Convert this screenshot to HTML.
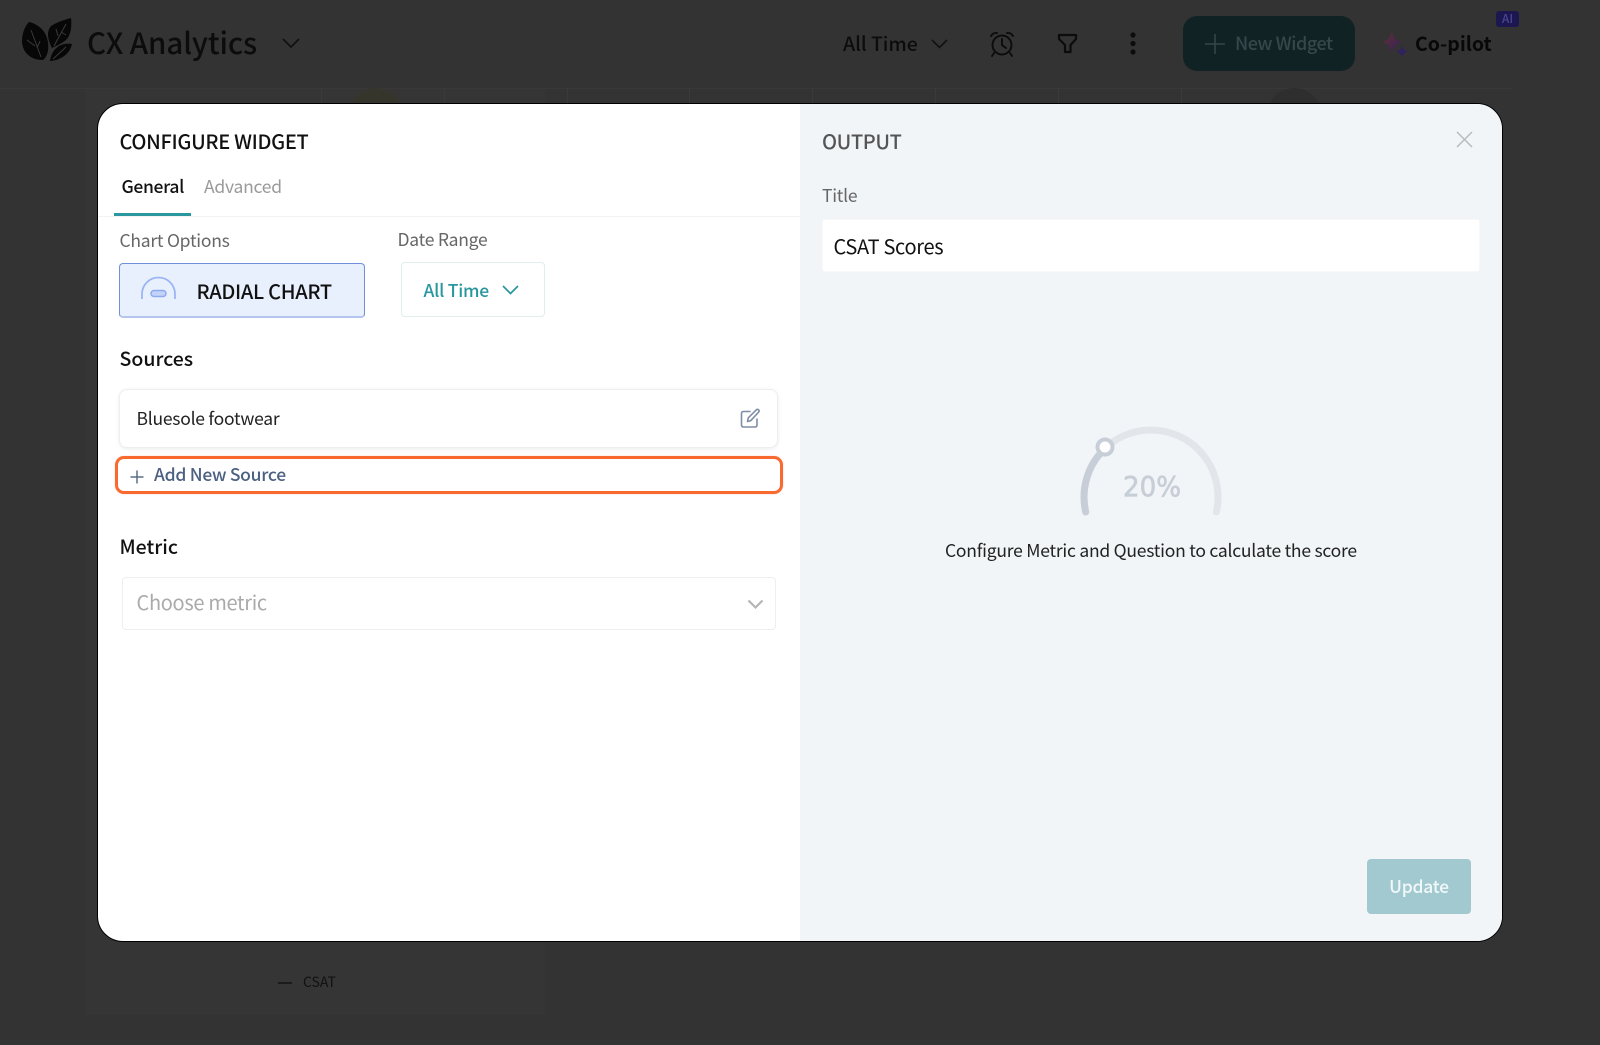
<!DOCTYPE html>
<html><head><meta charset="utf-8"><title>Configure Widget</title>
<style>
html,body{margin:0;padding:0;width:1600px;height:1045px;overflow:hidden;background:#333;font-family:"Noto Sans CJK SC","Liberation Sans",sans-serif}
#r{position:relative;width:1600px;height:1045px;overflow:hidden}
.a{position:absolute;box-sizing:border-box}
.t{position:absolute;white-space:nowrap;line-height:30px;height:30px}
.s{font-size:17.5px;letter-spacing:-.25px}
.l{font-size:20px;letter-spacing:-.32px}
svg{position:absolute;overflow:visible}
</style></head><body><div id="r">
<!-- dim background -->
<div class="a" style="left:86px;top:88px;width:459px;height:927px;background:#353535"></div>
<div class="a" style="left:0;top:88px;width:1513px;height:1px;background:#383838"></div>
<div class="a" style="left:321px;top:88px;width:1px;height:16px;background:#3a3a3a"></div>
<div class="a" style="left:444px;top:88px;width:1px;height:16px;background:#3a3a3a"></div>
<div class="a" style="left:567px;top:88px;width:1px;height:16px;background:#3a3a3a"></div>
<div class="a" style="left:689px;top:88px;width:1px;height:16px;background:#3a3a3a"></div>
<div class="a" style="left:812px;top:88px;width:1px;height:16px;background:#3a3a3a"></div>
<div class="a" style="left:935px;top:88px;width:1px;height:16px;background:#3a3a3a"></div>
<div class="a" style="left:1058px;top:88px;width:1px;height:16px;background:#3a3a3a"></div>
<div class="a" style="left:1181px;top:88px;width:1px;height:16px;background:#3a3a3a"></div>
<div class="a" style="left:350px;top:88px;width:52px;height:52px;border-radius:50%;background:#36352c"></div>
<div class="a" style="left:1267px;top:88px;width:54px;height:54px;border-radius:50%;background:#2e2e2e"></div>

<!-- logo -->
<svg style="left:20px;top:16px" width="54" height="46" viewBox="0 0 54 46">
<path d="M9 6 C18 8 27 15 28 27 C29 35 27 41 23 44 C12 44 3 38 2 26 C2 17 5 10 9 6Z" fill="#070707"/>
<path d="M31 10 C37 6 44 4 51 2 C52 10 51 19 46 24 C41 28 36 30 32 32 C28 24 26 16 31 10Z" fill="#070707"/>
<path d="M52 28 C50 37 42 44 30 45 C31 38 34 33 39 30 C43 28 48 27 52 28Z" fill="#070707"/>
<path d="M11 14 L21 41 M7 24 L15 30 M20 25 L17 32 M34 30 L46 8 M38 20 L36 13 M41 16 L46 19 M33 43 L46 31" stroke="#3a3a3a" stroke-width="1" fill="none"/>
</svg>
<div class="t" style="left:87px;top:27px;font-size:29.500px;font-weight:500;letter-spacing:-.1px;color:#0c0c0c">CX Analytics</div>
<svg style="left:282px;top:38px" width="18" height="11"><path d="M1 1 L9 9 L17 1" fill="none" stroke="#111" stroke-width="1.800"/></svg>

<div class="t" style="left:843px;top:28px;font-size:19.500px;font-weight:500;letter-spacing:-.05px;color:#0c0c0c">All Time</div>
<svg style="left:931px;top:39px" width="17" height="10"><path d="M1 1 L8.500 8.500 L16 1" fill="none" stroke="#111" stroke-width="1.600"/></svg>
<!-- alarm -->
<svg style="left:989px;top:31px" width="26" height="26" viewBox="0 0 26 26" fill="none" stroke="#0c0c0c" stroke-width="1.900" stroke-linecap="round">
<circle cx="13" cy="14" r="9.500"/><path d="M13 8 V14 L17 17"/><path d="M2 5 Q4 1.500 8 2 M24 5 Q22 1.500 18 2 M5 22 L3 25 M21 22 L23 25"/></svg>
<!-- filter -->
<svg style="left:1058px;top:34px" width="19" height="19" viewBox="0 0 19 19" fill="none" stroke="#0c0c0c" stroke-width="2.200" stroke-linejoin="round">
<path d="M1 1 H18 V5 L12.500 11 V18 H7 V11 L1 5Z"/></svg>
<svg style="left:1129px;top:31px" width="8" height="24"><circle cx="4" cy="4" r="2.600" fill="#0c0c0c"/><circle cx="4" cy="12.500" r="2.600" fill="#0c0c0c"/><circle cx="4" cy="21" r="2.600" fill="#0c0c0c"/></svg>
<!-- new widget -->
<div class="a" style="left:1183px;top:16px;width:172px;height:55px;border-radius:14px;background:#112225"></div>
<svg style="left:1205px;top:34px" width="20" height="20"><path d="M10 0 V20 M0 10 H20" stroke="#33464a" stroke-width="1.600"/></svg>
<div class="t" style="left:1235px;top:28px;font-size:18px;font-weight:500;letter-spacing:-.45px;color:#34484b">New Widget</div>
<!-- copilot -->
<svg style="left:1382px;top:31px" width="27" height="27" viewBox="0 0 27 27">
<defs><linearGradient id="g" x1="0" y1="0" x2="1" y2="1"><stop offset="0" stop-color="#61302f"/><stop offset="1" stop-color="#33205e"/></linearGradient></defs>
<path d="M10 0 C11.500 6 13.500 9 20 11 C13.500 13 11.500 16 10 22 C8.500 16 6.500 13 0 11 C6.500 9 8.500 6 10 0Z" fill="url(#g)"/>
<path d="M20 14 C20.800 18 22 19.500 26 20.500 C22 21.500 20.800 23 20 27 C19.200 23 18 21.500 14 20.500 C18 19.500 19.200 18 20 14Z" fill="#30215f"/></svg>
<div class="t" style="left:1415px;top:28px;font-size:19.500px;font-weight:700;color:#080808">Co-pilot</div>
<div class="a" style="left:1496px;top:11px;width:23px;height:16px;border-radius:3px;background:#1c1750;color:#4a4690;font-size:12px;font-weight:500;text-align:center;line-height:16px">AI</div>

<!-- footer legend -->
<div class="a" style="left:278px;top:982px;width:14px;height:2px;background:#1b1b1b"></div>
<div class="t" style="left:303px;top:967px;font-size:14px;color:#111">CSAT</div>

<!-- modal -->
<div class="a" style="left:97px;top:103px;width:1406px;height:839px;border:1px solid #000;border-radius:26px;overflow:hidden;background:#fff">
  <div class="a" style="left:702px;top:0;width:702px;height:837px;background:#f1f5f8"></div>
</div>

<!-- left panel -->
<div class="t l" style="left:119.500px;top:126px;font-weight:500;color:#111">CONFIGURE WIDGET</div>
<div class="t s" style="left:121.500px;top:171.500px;font-weight:500;letter-spacing:-.35px;color:#111">General</div>
<div class="t s" style="left:204px;top:171.500px;color:#9a9a9a">Advanced</div>
<div class="a" style="left:98px;top:216px;width:702px;height:1px;background:#f2f2f2"></div>
<div class="a" style="left:114px;top:213px;width:77px;height:3px;background:#2a969e"></div>
<div class="t s" style="left:119.500px;top:225.500px;color:#666">Chart Options</div>
<div class="t s" style="left:397.500px;top:224.500px;color:#666">Date Range</div>

<div class="a" style="left:119px;top:263px;width:246px;height:55px;background:#e9f0fd;border:1px solid #6f8fdd;border-bottom:2px solid #b4c5ee;border-radius:4px"></div>
<svg style="left:140px;top:276px" width="37" height="24" viewBox="0 0 37 24">
<path d="M2 23 V18 A16.500 16.500 0 0 1 35 18 V23" fill="none" stroke="#9ab5f5" stroke-width="1.800"/>
<rect x="11" y="14.500" width="15" height="6" rx="3" fill="#c3d3f7" stroke="#8eaaef" stroke-width="1.500"/></svg>
<div class="t" style="left:196.500px;top:276px;font-size:20px;font-weight:500;letter-spacing:-.3px;color:#111">RADIAL CHART</div>

<div class="a" style="left:401px;top:262px;width:144px;height:55px;background:#fff;border:1px solid #e0eeee;border-radius:4px"></div>
<div class="t s" style="left:423.500px;top:275.500px;font-weight:500;color:#2a969e">All Time</div>
<svg style="left:502px;top:285px" width="17" height="10"><path d="M1 1 L8.500 8.500 L16 1" fill="none" stroke="#2a969e" stroke-width="1.700"/></svg>

<div class="t" style="left:119.500px;top:343px;font-size:19.500px;font-weight:500;color:#111">Sources</div>
<div class="a" style="left:119px;top:389px;width:659px;height:59px;background:#fff;border:1px solid #eee;border-radius:8px;box-shadow:0 1px 4px rgba(0,0,0,.08)"></div>
<div class="t s" style="left:136.500px;top:404px;color:#222">Bluesole footwear</div>
<svg style="left:740px;top:408px" width="21" height="21" viewBox="0 0 21 21" fill="none" stroke="#7f8ea6" stroke-width="1.600" stroke-linecap="round" stroke-linejoin="round">
<path d="M10 3.500 H3.500 Q1.500 3.500 1.500 5.500 V17 Q1.500 19 3.500 19 H15 Q17 19 17 17 V11"/>
<path d="M7.500 13.500 L8.300 9.800 L16.500 1.700 Q17.500 0.900 18.600 1.900 Q19.600 3 18.700 4 L10.700 12.700Z"/></svg>

<div class="a" style="left:115px;top:456px;width:668px;height:38px;border:3px solid #f86a2f;border-radius:9px;box-shadow:0 0 1px rgba(245,107,50,.5)"></div>
<svg style="left:130px;top:470px" width="14" height="14"><path d="M7 0.500 V13.500 M0.500 7 H13.500" stroke="#5b6d8a" stroke-width="1.500"/></svg>
<div class="t s" style="left:154px;top:460px;font-weight:500;letter-spacing:-.28px;color:#4c6080">Add New Source</div>

<div class="t" style="left:119.500px;top:531px;font-size:19.500px;font-weight:500;color:#111">Metric</div>
<div class="a" style="left:122px;top:577px;width:654px;height:53px;background:#fff;border:1px solid #eee;border-radius:4px"></div>
<div class="t l" style="left:136.500px;top:587px;color:#aaa">Choose metric</div>
<svg style="left:747px;top:599px" width="17" height="11"><path d="M1.500 1.500 L8.500 8.500 L15.500 1.500" fill="none" stroke="#b5b5b5" stroke-width="2.200"/></svg>

<!-- right panel -->
<div class="t l" style="left:822px;top:126px;font-weight:500;letter-spacing:-.4px;color:#555">OUTPUT</div>
<svg style="left:1456px;top:131px" width="17" height="17"><path d="M1 1 L16 16 M16 1 L1 16" stroke="#b9bcbf" stroke-width="1.500"/></svg>
<div class="t s" style="left:822px;top:181px;color:#666">Title</div>
<div class="a" style="left:822px;top:219px;width:658px;height:53px;background:#fff;border:1px solid #f6f8fa;border-radius:3px"></div>
<div class="t l" style="left:833.500px;top:230.500px;color:#111">CSAT Scores</div>

<svg style="left:1070px;top:420px" width="164" height="104" viewBox="1070 420 164 104">
<path d="M1085.700 512 A67 67 0 1 1 1216.300 512" fill="none" stroke="#e2e6eb" stroke-width="7" stroke-linecap="round"/>
<path d="M1085.700 512 A67 67 0 0 1 1105 448.500" fill="none" stroke="#c8ced7" stroke-width="7" stroke-linecap="round"/>
<circle cx="1105" cy="447" r="7.500" fill="#fff" stroke="#c8ced7" stroke-width="4"/>
<text x="1123" y="496" textLength="58" lengthAdjust="spacingAndGlyphs" font-family="'DejaVu Sans','Liberation Sans',sans-serif" font-size="28" fill="#c8ced7" stroke="#c8ced7" stroke-width=".7">20%</text>
</svg>
<div class="t s" style="left:945px;top:536px;letter-spacing:-.24px;color:#222">Configure Metric and Question to calculate the score</div>

<div class="a" style="left:1367px;top:859px;width:104px;height:55px;background:#a2c9d0;border-radius:4px"></div>
<div class="t s" style="left:1367px;top:872px;width:104px;text-align:center;font-weight:500;color:#f1f8f9">Update</div>
</div></body></html>
